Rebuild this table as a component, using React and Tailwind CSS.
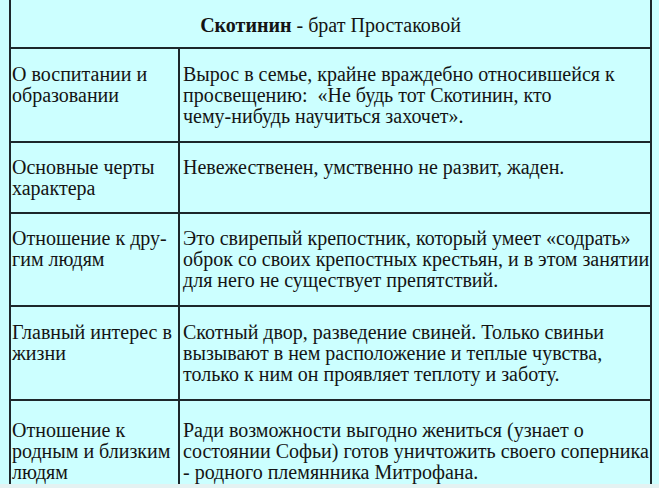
const rows = [
  {
    label: ['О воспитании и', 'образовании'],
    text: [
      'Вырос в семье, крайне враждебно относившейся к',
      'просвещению:  «Не будь тот Скотинин, кто',
      'чему-нибудь научиться захочет».',
    ],
    h: 'h-[94px]',
    pt: 'pt-[15px]',
  },
  {
    label: ['Основные черты', 'характера'],
    text: ['Невежественен, умственно не развит, жаден.'],
    h: 'h-[71px]',
    pt: 'pt-[14px]',
  },
  {
    label: ['Отношение к дру-', 'гим людям'],
    text: [
      'Это свирепый крепостник, который умеет «содрать»',
      'оброк со своих крепостных крестьян, и в этом занятии',
      'для него не существует препятствий.',
    ],
    h: 'h-[93px]',
    pt: 'pt-[14px]',
  },
  {
    label: ['Главный интерес в', 'жизни'],
    text: [
      'Скотный двор, разведение свиней. Только свиньи',
      'вызывают в нем расположение и теплые чувства,',
      'только к ним он проявляет теплоту и заботу.',
    ],
    h: 'h-[94px]',
    pt: 'pt-[15px]',
  },
  {
    label: ['Отношение к', 'родным и близким', 'людям'],
    text: [
      'Ради возможности выгодно жениться (узнает о',
      'состоянии Софьи) готов уничтожить своего соперника',
      '- родного племянника Митрофана.',
    ],
    h: 'flex-1',
    pt: 'pt-[19px]',
    last: true,
  },
];

// each line is placed by hand, as in the source slide
const Lines = ({ lines }) =>
  lines.map((line, i) => (
    <div key={i} className="whitespace-pre">
      {line}
    </div>
  ));

const App = () => {
  return (
    <div className="w-[659px] h-[488px] bg-[#ccffff] overflow-hidden text-[#141414] font-['Liberation_Serif',serif] text-[20px] leading-[21px]">
      <div className="ml-[9px] w-[643px] h-[484px] border-x-2 border-[#1d272b] flex flex-col">
        {/* Header */}
        <div className="h-[49px] shrink-0 border-b-2 border-[#1d272b] flex items-center justify-center pt-[4px]">
          <span>
            <b>Скотинин</b> - брат Простаковой
          </span>
        </div>

        {rows.map((row) => (
          <div
            key={row.label[0] + row.text[0]}
            className={`grid grid-cols-[169px_1fr] shrink-0 ${row.last ? '' : 'border-b-2 border-[#1d272b]'} ${row.h}`}
          >
            <div className={`border-r-2 border-[#1d272b] pl-[1px] ${row.pt}`}>
              <Lines lines={row.label} />
            </div>
            <div className={`pl-[3px] ${row.pt}`}>
              <Lines lines={row.text} />
            </div>
          </div>
        ))}
      </div>
      <div className="h-[4px] bg-[#e4f2f2]" />
    </div>
  );
};

export default App;
